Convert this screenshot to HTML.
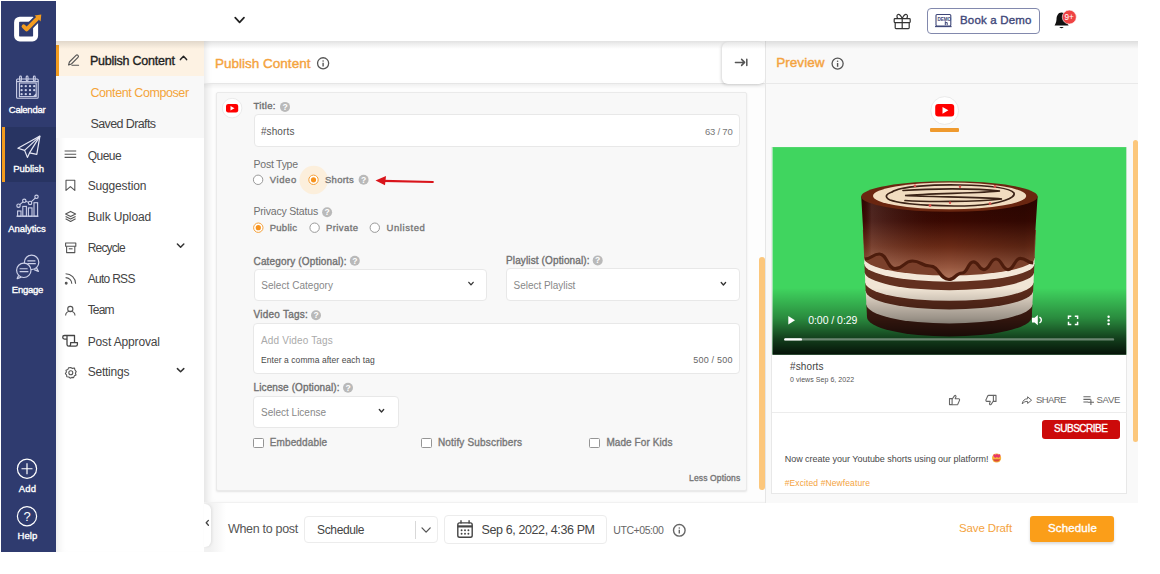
<!DOCTYPE html>
<html><head><meta charset="utf-8"><style>
html,body{margin:0;padding:0;}
body{width:1160px;height:574px;position:relative;overflow:hidden;background:#fff;font-family:"Liberation Sans",sans-serif;}
.a{position:absolute;box-sizing:border-box;}
.t{position:absolute;white-space:nowrap;line-height:1;}
svg{position:absolute;overflow:visible;}

</style></head><body>
<div class="a" style="left:204px;top:41px;width:934px;height:510.6px;background:#f1f1f1;"></div><div class="a" style="left:1px;top:1px;width:55px;height:550.6px;background:#2f3b6f;"></div><div class="a" style="left:1px;top:126.8px;width:55px;height:55.2px;background:#283462;"></div><div class="a" style="left:1.5px;top:126.8px;width:3.0px;height:55.2px;background:#f39c1f;"></div><div class="a" style="left:56px;top:41px;width:148px;height:510.6px;background:#fff;box-shadow:inset 8px 0 8px -6px #e8e8e8;"></div><div class="a" style="left:56px;top:76px;width:148px;height:62.30000000000001px;background:#f8f8f8;"></div><div class="a" style="left:56px;top:41px;width:148px;height:35px;background:#fdf2e3;"></div><div class="a" style="left:56px;top:44.5px;width:3px;height:31.5px;background:#f39c1f;"></div><div class="a" style="left:204px;top:41px;width:561px;height:461px;background:#fdfdfd;box-shadow:inset 7px 0 7px -4px #e2e2e2;"></div><div class="a" style="left:204px;top:41px;width:561px;height:43.2px;background:#fff;border-bottom:1px solid #e6e6e6;box-shadow:inset 6px 0 6px -4px #e8e8e8;"></div><div class="a" style="left:204px;top:84.2px;width:561px;height:4.799999999999997px;background:linear-gradient(rgba(0,0,0,.05),rgba(0,0,0,0));"></div><div class="a" style="left:722px;top:42px;width:42.5px;height:41.5px;background:#fff;border-radius:6px;box-shadow:-1px 1px 3px rgba(0,0,0,.16);"></div><div class="a" style="left:215.8px;top:92.3px;width:531.2px;height:398.5px;background:#f8f8f8;border:1px solid #eaeaea;border-radius:2px;box-shadow:0 1px 2px rgba(0,0,0,.10);"></div><div class="a" style="left:759px;top:257px;width:6px;height:232.5px;background:#fcc77c;border-radius:3px;"></div><div class="a" style="left:765px;top:41px;width:373px;height:461.5px;background:#f9f9f9;border-left:1px solid #e6e6e6;"></div><div class="a" style="left:766px;top:83px;width:372px;height:1px;background:#e9e9e9;"></div><div class="a" style="left:1132.5px;top:140px;width:5.5px;height:301.5px;background:#fcc77c;border-radius:3px;"></div><div class="a" style="left:771px;top:147px;width:355.5999999999999px;height:346.6px;background:#fff;border:1px solid #e8e8e8;"></div><div class="a" style="left:210px;top:503px;width:928px;height:48.60000000000002px;background:#fff;"></div><div class="a" style="left:210px;top:503px;width:16px;height:48.60000000000002px;background:linear-gradient(90deg,#f1f1f1,rgba(255,255,255,0));"></div><div class="a" style="left:204px;top:503.5px;width:6.5px;height:43.5px;background:#fff;border-radius:0 6px 6px 0;box-shadow:1px 0 3px rgba(0,0,0,.08);"></div><div class="a" style="left:56px;top:41px;width:1082px;height:8px;background:linear-gradient(rgba(0,0,0,.11),rgba(0,0,0,0));"></div><div class="a" style="left:254px;top:114.4px;width:486.20000000000005px;height:32.19999999999999px;background:#fff;border:1px solid #e8e8e8;border-radius:4px;"></div><div class="a" style="left:253.5px;top:268.5px;width:233.5px;height:32.5px;background:#fff;border:1px solid #e8e8e8;border-radius:4px;"></div><div class="a" style="left:505.6px;top:268.4px;width:234.60000000000002px;height:32.400000000000034px;background:#fff;border:1px solid #e8e8e8;border-radius:4px;"></div><div class="a" style="left:253.3px;top:322.6px;width:486.90000000000003px;height:51.299999999999955px;background:#fff;border:1px solid #e8e8e8;border-radius:4px;"></div><div class="a" style="left:253.3px;top:395.8px;width:145.3px;height:32.39999999999998px;background:#fff;border:1px solid #e8e8e8;border-radius:4px;"></div><div class="a" style="left:253px;top:438px;width:10.600000000000023px;height:10.199999999999989px;border:1px solid #959595;border-radius:1.5px;background:#fff;"></div><div class="a" style="left:421.2px;top:437.6px;width:10.600000000000023px;height:10.199999999999989px;border:1px solid #959595;border-radius:1.5px;background:#fff;"></div><div class="a" style="left:589.4px;top:437.6px;width:10.600000000000023px;height:10.199999999999989px;border:1px solid #959595;border-radius:1.5px;background:#fff;"></div><svg style="left:0;top:0" width="1" height="1"><circle cx="313.7" cy="180" r="14.3" fill="#fcefdc"/></svg><svg style="left:0;top:0" width="1" height="1"><circle cx="258.1" cy="179.8" r="4.7" fill="#fff" stroke="#9a9a9a" stroke-width="1"/></svg><svg style="left:0;top:0" width="1" height="1"><circle cx="313.5" cy="179.8" r="4.7" fill="#fff" stroke="#f5a13a" stroke-width="1"/><circle cx="313.5" cy="179.8" r="2.6" fill="#f7931e"/></svg><svg style="left:0;top:0" width="1" height="1"><circle cx="258.3" cy="227.7" r="4.7" fill="#fff" stroke="#f5a13a" stroke-width="1"/><circle cx="258.3" cy="227.7" r="2.6" fill="#f7931e"/></svg><svg style="left:0;top:0" width="1" height="1"><circle cx="314.6" cy="227.7" r="4.7" fill="#fff" stroke="#9a9a9a" stroke-width="1"/></svg><svg style="left:0;top:0" width="1" height="1"><circle cx="374.8" cy="227.7" r="4.7" fill="#fff" stroke="#9a9a9a" stroke-width="1"/></svg><svg style="left:0;top:0" width="1" height="1"><circle cx="285" cy="106.9" r="5" fill="#b9b9b9"/><text x="285" y="109.9" font-size="8.6" font-weight="700" fill="#fff" text-anchor="middle" font-family="Liberation Sans">?</text></svg><svg style="left:0;top:0" width="1" height="1"><circle cx="363.6" cy="179.7" r="5" fill="#b9b9b9"/><text x="363.6" y="182.7" font-size="8.6" font-weight="700" fill="#fff" text-anchor="middle" font-family="Liberation Sans">?</text></svg><svg style="left:0;top:0" width="1" height="1"><circle cx="327.1" cy="212.3" r="5" fill="#b9b9b9"/><text x="327.1" y="215.3" font-size="8.6" font-weight="700" fill="#fff" text-anchor="middle" font-family="Liberation Sans">?</text></svg><svg style="left:0;top:0" width="1" height="1"><circle cx="354.8" cy="260.7" r="5" fill="#b9b9b9"/><text x="354.8" y="263.7" font-size="8.6" font-weight="700" fill="#fff" text-anchor="middle" font-family="Liberation Sans">?</text></svg><svg style="left:0;top:0" width="1" height="1"><circle cx="597.7" cy="260.4" r="5" fill="#b9b9b9"/><text x="597.7" y="263.4" font-size="8.6" font-weight="700" fill="#fff" text-anchor="middle" font-family="Liberation Sans">?</text></svg><svg style="left:0;top:0" width="1" height="1"><circle cx="316" cy="315.2" r="5" fill="#b9b9b9"/><text x="316" y="318.2" font-size="8.6" font-weight="700" fill="#fff" text-anchor="middle" font-family="Liberation Sans">?</text></svg><svg style="left:0;top:0" width="1" height="1"><circle cx="348" cy="387.8" r="5" fill="#b9b9b9"/><text x="348" y="390.8" font-size="8.6" font-weight="700" fill="#fff" text-anchor="middle" font-family="Liberation Sans">?</text></svg><svg style="left:0;top:0" width="1" height="1"><path d="M383 180.8 L432.8 182" stroke="#d9141b" stroke-width="2.2" stroke-linecap="round"/><path d="M375.5 180.6 L386 176 L385 185.2 Z" fill="#d9141b"/></svg><svg style="left:0;top:0" width="1" height="1"><path d="M468.8 282.35 L471 284.85 L473.2 282.35" fill="none" stroke="#333" stroke-width="1.3" stroke-linecap="round" stroke-linejoin="round"/></svg><svg style="left:0;top:0" width="1" height="1"><path d="M721.1999999999999 282.55 L723.4 285.05 L725.6 282.55" fill="none" stroke="#333" stroke-width="1.3" stroke-linecap="round" stroke-linejoin="round"/></svg><svg style="left:0;top:0" width="1" height="1"><path d="M379.3 409.55 L381.5 412.05 L383.7 409.55" fill="none" stroke="#333" stroke-width="1.3" stroke-linecap="round" stroke-linejoin="round"/></svg><div class="a" style="left:304.1px;top:516px;width:133.79999999999995px;height:26.799999999999955px;background:#fff;border:1px solid #ececec;border-radius:4px;"></div><div class="a" style="left:415px;top:521px;width:1px;height:17.700000000000045px;background:#d8d8d8;"></div><svg style="left:0;top:0" width="1" height="1"><path d="M422.0 527.9 L426.1 532.1 L430.20000000000005 527.9" fill="none" stroke="#555" stroke-width="1.3" stroke-linecap="round" stroke-linejoin="round"/></svg><div class="a" style="left:444.3px;top:514.7px;width:162.49999999999994px;height:29.5px;background:#fff;border:1px solid #ececec;border-radius:4px;"></div><div class="a" style="left:1030.4px;top:516.2px;width:83.89999999999986px;height:25.399999999999977px;background:#fb9e19;border-radius:3px;box-shadow:0 2px 3px rgba(0,0,0,.15);"></div><div class="a" style="left:772px;top:412px;width:354.5px;height:1px;background:#ececec;"></div><div class="a" style="left:1042.2px;top:420.2px;width:77.79999999999995px;height:18.600000000000023px;background:#cc0a0a;border-radius:3px;"></div><div class="a" style="left:926.5px;top:7.8px;width:113.0px;height:25.8px;border:1.2px solid #8289ad;border-radius:4px;"></div><svg style="left:0;top:0" width="1" height="1"><defs><linearGradient id="choc" x1="0" y1="196" x2="0" y2="280" gradientUnits="userSpaceOnUse"><stop offset="0" stop-color="#2e0600"/><stop offset="0.3" stop-color="#3a0902"/><stop offset="0.6" stop-color="#692a16"/><stop offset="0.85" stop-color="#985840"/><stop offset="1" stop-color="#b47a60"/></linearGradient><linearGradient id="chocH" x1="861" y1="0" x2="1038" y2="0" gradientUnits="userSpaceOnUse"><stop offset="0" stop-color="#000" stop-opacity="0"/><stop offset="0.06" stop-color="#fff" stop-opacity="0.12"/><stop offset="0.5" stop-color="#000" stop-opacity="0"/><stop offset="0.92" stop-color="#000" stop-opacity="0.15"/><stop offset="1" stop-color="#000" stop-opacity="0.05"/></linearGradient><linearGradient id="vgrad" x1="0" y1="288" x2="0" y2="355" gradientUnits="userSpaceOnUse"><stop offset="0" stop-color="#000" stop-opacity="0"/><stop offset="0.45" stop-color="#000" stop-opacity="0.35"/><stop offset="0.75" stop-color="#000" stop-opacity="0.7"/><stop offset="1" stop-color="#000" stop-opacity="0.92"/></linearGradient><clipPath id="vclip"><rect x="772.3" y="147.1" width="354.2" height="207.7"/></clipPath></defs><g clip-path="url(#vclip)"><rect x="772.3" y="147.1" width="354.2" height="207.7" fill="#40d55f"/><path d="M866.4 304.3 L1032.4 304.3 L1031.8 316.9 L867.0 316.9 Z" fill="#4e2216"/><ellipse cx="949.4" cy="316.9" rx="82.4" ry="19.6" fill="#4e2216"/><path d="M865.7 290.8 L1033.1 290.8 L1032.4 304.3 L866.4 304.3 Z" fill="#efe2d2"/><ellipse cx="949.4" cy="304.3" rx="83.0" ry="19.2" fill="#efe2d2"/><path d="M865.3 282.4 L1033.5 282.4 L1033.1 290.8 L865.7 290.8 Z" fill="#5e2c1c"/><ellipse cx="949.4" cy="290.8" rx="83.7" ry="18.7" fill="#5e2c1c"/><path d="M864.8 272.2 L1034.0 272.2 L1033.5 282.4 L865.3 282.4 Z" fill="#f1e5d5"/><ellipse cx="949.4" cy="282.4" rx="84.1" ry="18.4" fill="#f1e5d5"/><path d="M864.4 264.0 L1034.4 264.0 L1034.0 272.2 L864.8 272.2 Z" fill="#63301f"/><ellipse cx="949.4" cy="272.2" rx="84.6" ry="18.0" fill="#63301f"/><path d="M864.2 258.0 L1034.6 258.0 L1034.4 264.0 L864.4 264.0 Z" fill="#f3e7d8"/><ellipse cx="949.4" cy="264.0" rx="85.0" ry="17.7" fill="#f3e7d8"/><path d="M862.8 230.0 L1036.0 230.0 L1034.6 258.0 L864.2 258.0 Z" fill="#7b402b"/><ellipse cx="949.4" cy="258.0" rx="85.2" ry="17.5" fill="#7b402b"/><path d="M861.2 196.5 L1037.6 196.5 L1033.2 263 C1026.8 263 1026.8 258.3 1020.4 258.3 C1014.2 258.3 1014.2 269.6 1008 269.6 C1002.0 269.6 1002.0 259 996 259 C989.95 259 989.95 269.6 983.9 269.6 C978.65 269.6 978.65 261.8 973.4 261.8 C967.7 261.8 967.7 273 962 273 C955.5 273 955.5 279.5 949 279.5 C939.5 279.5 939.5 266 930 266 C921.25 266 921.25 261 912.5 261 C903.75 261 903.75 268.7 895 268.7 C887.2 268.7 887.2 254 879.4 254 C872.0999999999999 254 872.0999999999999 259 864.8 259 Z" fill="url(#choc)"/><path d="M861.2 196.5 L1037.6 196.5 L1033.2 263 C1026.8 263 1026.8 258.3 1020.4 258.3 C1014.2 258.3 1014.2 269.6 1008 269.6 C1002.0 269.6 1002.0 259 996 259 C989.95 259 989.95 269.6 983.9 269.6 C978.65 269.6 978.65 261.8 973.4 261.8 C967.7 261.8 967.7 273 962 273 C955.5 273 955.5 279.5 949 279.5 C939.5 279.5 939.5 266 930 266 C921.25 266 921.25 261 912.5 261 C903.75 261 903.75 268.7 895 268.7 C887.2 268.7 887.2 254 879.4 254 C872.0999999999999 254 872.0999999999999 259 864.8 259 Z" fill="url(#chocH)"/><path d="M864.8 259 C872.0999999999999 259 872.0999999999999 254 879.4 254 C887.2 254 887.2 268.7 895 268.7 C903.75 268.7 903.75 261 912.5 261 C921.25 261 921.25 266 930 266 C939.5 266 939.5 279.5 949 279.5 C955.5 279.5 955.5 273 962 273 C967.7 273 967.7 261.8 973.4 261.8 C978.65 261.8 978.65 269.6 983.9 269.6 C989.95 269.6 989.95 259 996 259 C1002.0 259 1002.0 269.6 1008 269.6 C1014.2 269.6 1014.2 258.3 1020.4 258.3 C1026.8 258.3 1026.8 263 1033.2 263" fill="none" stroke="#4d1c0c" stroke-width="3.2"/><ellipse cx="949.4" cy="196.5" rx="88.2" ry="15.3" fill="#6a2610"/><ellipse cx="949.6" cy="195.9" rx="76.6" ry="13.3" fill="#f1dcc0"/><g fill="none" stroke="#3a2216" stroke-width="1.7" stroke-linecap="round"><path d="M892 192 C900 186 935 184.5 960 185 C990 185.5 1010 188 1014 193 C1016 198 1000 204 975 205.5 C945 207 905 205 890 200 C884 197 886 194 892 192"/><path d="M903 190.5 C930 188.5 975 188 1000 191 C985 193 930 193.5 905 195.5 C930 197 980 197 1002 199 C975 202 925 202 905 200.5"/></g><g fill="#d9534f"><circle cx="915" cy="185.8" r="1.4"/><circle cx="995" cy="186.5" r="1.4"/><circle cx="930" cy="205.5" r="1.4"/><circle cx="990" cy="203.6" r="1.4"/><circle cx="960" cy="186.8" r="1.2"/><circle cx="950" cy="202.8" r="1.2"/></g><rect x="772.3" y="285" width="354.2" height="70" fill="url(#vgrad)"/><path d="M788.3 316 L795 320.2 L788.3 324.5 Z" fill="#fff"/><rect x="784.2" y="338.2" width="330" height="2.4" rx="1.2" fill="#fff" fill-opacity="0.38"/><rect x="784.2" y="338.2" width="17.8" height="2.4" rx="1.2" fill="#fff"/><path d="M1032 317.8 L1034.6 317.8 L1037.8 315 L1037.8 325.2 L1034.6 322.4 L1032 322.4 Z" fill="#fff"/><path d="M1039.5 317.2 C1042 318.8 1042 321.4 1039.5 323" fill="none" stroke="#fff" stroke-width="1.4"/><path d="M1068.5 319 L1068.5 316.3 L1071.3 316.3 M1074.8 316.3 L1077.6 316.3 L1077.6 319 M1077.6 321.8 L1077.6 324.5 L1074.8 324.5 M1071.3 324.5 L1068.5 324.5 L1068.5 321.8" fill="none" stroke="#fff" stroke-width="1.5"/><circle cx="1108.6" cy="316.8" r="1.2" fill="#fff"/><circle cx="1108.6" cy="320.4" r="1.2" fill="#fff"/><circle cx="1108.6" cy="324" r="1.2" fill="#fff"/></g></svg><svg style="left:0;top:0" width="1" height="1"><rect x="16.6" y="19.2" width="19" height="19.7" rx="3.2" fill="none" stroke="#fff" stroke-width="5"/><path d="M23.6 26.4 L26.6 29.4 L37.5 18.4" fill="none" stroke="#2f3b6f" stroke-width="7.5" stroke-linecap="round" stroke-linejoin="round"/><path d="M23.6 26.4 L26.6 29.4 L37 18.8" fill="none" stroke="#f39c1f" stroke-width="4" stroke-linecap="round" stroke-linejoin="round"/><path d="M34.6 15.4 L41.3 14.6 L40.6 21.4 Z" fill="#f39c1f"/></svg><svg style="left:0;top:0" width="1" height="1"><g fill="none" stroke="#ccd0e8" stroke-width="1.1"><rect x="16.6" y="79" width="21.6" height="19.2" rx="1"/><rect x="19.4" y="83" width="16.8" height="13.6"/><path d="M16.6 81.6 H38.2"/><rect x="19.6" y="76" width="1.8" height="5" rx="0.9"/><rect x="26.2" y="76" width="1.8" height="5" rx="0.9"/><rect x="33.4" y="76" width="1.8" height="5" rx="0.9"/></g><g fill="#ccd0e8"><circle cx="21.6" cy="86.2" r="1.15"/><circle cx="25.8" cy="86.2" r="1.15"/><circle cx="30.0" cy="86.2" r="1.15"/><circle cx="34.2" cy="86.2" r="1.15"/><circle cx="21.6" cy="90.2" r="1.15"/><circle cx="25.8" cy="90.2" r="1.15"/><circle cx="30.0" cy="90.2" r="1.15"/><circle cx="34.2" cy="90.2" r="1.15"/><circle cx="21.6" cy="94.2" r="1.15"/><circle cx="25.8" cy="94.2" r="1.15"/><circle cx="30.0" cy="94.2" r="1.15"/></g><path d="M32.8 96.6 L36.2 93.2 L36.2 96.6 Z" fill="#ccd0e8"/></svg><svg style="left:0;top:0" width="1" height="1"><g fill="none" stroke="#e6e8f4" stroke-width="1.2" stroke-linejoin="round"><path d="M39.9 136.1 L17.9 148.3 L24.6 150.4 L27.4 157.4 L29.5 152.9 L36.8 154.4 Z"/><path d="M39.9 136.1 L24.6 150.4"/><path d="M39.9 136.1 L29.5 152.9"/></g></svg><svg style="left:0;top:0" width="1" height="1"><g fill="none" stroke="#ccd0e8" stroke-width="1.1"><path d="M16.4 216.2 H38.4"/><rect x="17.6" y="211" width="3.4" height="5.2"/><rect x="22.8" y="206.4" width="3.6" height="9.8"/><rect x="28.4" y="207.9" width="3.6" height="8.3"/><rect x="34" y="202.7" width="3.6" height="13.5"/><path d="M18.5 205.7 L24.3 200.8 L30.1 202.9 L36.5 196.8"/></g><g fill="#2f3b6f" stroke="#ccd0e8" stroke-width="1.1"><circle cx="18.5" cy="205.7" r="1.7"/><circle cx="24.3" cy="200.8" r="1.7"/><circle cx="30.1" cy="202.9" r="1.7"/><circle cx="36.5" cy="196.8" r="1.7"/></g></svg><svg style="left:0;top:0" width="1" height="1"><g fill="#2f3b6f" stroke="#ccd0e8" stroke-width="1.2" stroke-linejoin="round"><path d="M36.4 267.6 L38.4 271.4 L34.2 269.6"/><circle cx="31.6" cy="262.3" r="7.2"/><path d="M27.4 260.9 H35.4 M27.4 263.6 H35.8" stroke-width="1.1"/><path d="M18.6 275.4 L17.2 278.6 L21.2 277.2"/><circle cx="23.8" cy="270.3" r="7.2"/><path d="M19.6 268.8 H27.6 M19.6 271.6 H28.4" stroke-width="1.1"/></g></svg><svg style="left:0;top:0" width="1" height="1"><g fill="none" stroke="#fff" stroke-width="1.2"><circle cx="27" cy="468.75" r="9.6"/><path d="M27 463.2 V474.3 M21.5 468.75 H32.5"/><circle cx="27" cy="516.25" r="9.6"/></g><text x="27" y="521" font-size="13" fill="#fff" text-anchor="middle" font-family="Liberation Sans">?</text></svg><svg style="left:0;top:0" width="1" height="1"><g fill="none" stroke="#555" stroke-width="1.1" stroke-linecap="round" stroke-linejoin="round"><path d="M68.6 65 L69.4 62 L76 55.4 A1.4 1.4 0 0 1 78 57.4 L71.4 64 Z"/><path d="M72 65.2 H78.6"/></g><path d="M180.4 59.6 L183.5 56.3 L186.6 59.6" fill="none" stroke="#222" stroke-width="1.5" stroke-linecap="round" stroke-linejoin="round"/></svg><svg style="left:0;top:0" width="1" height="1"><g fill="none" stroke="#555" stroke-width="1.1" stroke-linejoin="round"><path d="M64.6 151 H76.2 M64.6 154.2 H76.2 M64.6 157.4 H76.2"/><path d="M66 180.2 H74.8 V190.4 L70.4 186.6 L66 190.4 Z"/><path d="M70.6 211.4 L75.6 214 L70.6 216.6 L65.6 214 Z"/><path d="M65.6 216.4 L70.6 219 L75.6 216.4"/><path d="M65.6 218.8 L70.6 221.4 L75.6 218.8"/><rect x="65.6" y="243" width="10.2" height="3.2"/><path d="M66.6 246.2 V252.6 H74.8 V246.2"/><path d="M68.8 248.8 H72.6"/><path d="M65.6 273.8 A10 10 0 0 1 75.6 283.8"/><path d="M65.6 277.6 A6.2 6.2 0 0 1 71.8 283.8"/><circle cx="66.2" cy="283.2" r="0.9" fill="#555"/><circle cx="70.3" cy="309" r="2.6"/><path d="M65.6 315.6 A4.7 4.4 0 0 1 75 315.6"/><path d="M64.5 335.5 H74.5 V342.6 M64.5 335.5 A1.8 1.8 0 0 0 64.5 339.1 H67 M67 335.5 V344.4 A1.8 1.8 0 0 0 68.8 346.2 H75.6 A1.8 1.8 0 0 0 77.4 344.4 V342.6 H70.6 V344.4 A1.8 1.8 0 0 1 68.8 346.2" stroke-width="1.3" stroke="#444"/><circle cx="70.8" cy="372.8" r="2"/><path d="M70.8 367.6 L72.4 368.4 L74.4 368 L75 370 L76.2 371.6 L75.4 373.2 L76 375 L74.4 375.8 L73.6 377.6 L71.8 377.4 L70.2 378.2 L68.8 377 L66.8 376.8 L66.6 375 L65.4 373.6 L66.4 372 L66 370.2 L67.8 369.6 L68.6 367.8 Z"/></g></svg><svg style="left:0;top:0" width="1" height="1"><path d="M177.4 244.0 L180.6 247.2 L183.79999999999998 244.0" fill="none" stroke="#333" stroke-width="1.5" stroke-linecap="round" stroke-linejoin="round"/></svg><svg style="left:0;top:0" width="1" height="1"><path d="M177.4 368.59999999999997 L180.6 371.8 L183.79999999999998 368.59999999999997" fill="none" stroke="#333" stroke-width="1.5" stroke-linecap="round" stroke-linejoin="round"/></svg><svg style="left:0;top:0" width="1" height="1"><path d="M235.2 17.6 L239.6 22.4 L244 17.6" fill="none" stroke="#222" stroke-width="1.7" stroke-linecap="round" stroke-linejoin="round"/></svg><svg style="left:0;top:0" width="1" height="1"><g fill="none" stroke="#333" stroke-width="1.2" stroke-linejoin="round"><rect x="894.2" y="18.6" width="16" height="4" rx="0.8"/><path d="M895.2 22.6 V27.8 A0.8 0.8 0 0 0 896 28.6 H908.4 A0.8 0.8 0 0 0 909.2 27.8 V22.6"/><path d="M902.2 18.6 V28.6"/><path d="M902.2 18.4 C899 12 895.5 14.5 897.6 18.4 M902.2 18.4 C905.4 12 908.9 14.5 906.8 18.4"/></g></svg><svg style="left:0;top:0" width="1" height="1"><g fill="none" stroke="#3e4678" stroke-width="1.1"><rect x="936" y="14.5" width="14.8" height="11.6" rx="1"/><path d="M935 26.6 H951.6"/></g><text x="937.4" y="20.6" font-size="4.6" font-weight="700" fill="#3e4678" font-family="Liberation Sans">DEMO</text><path d="M945.3 21.3 V25.2 M945.3 22.6 H947.2 V25.2" fill="none" stroke="#3e4678" stroke-width="1"/></svg><svg style="left:0;top:0" width="1" height="1"><path d="M1061.5 12.6 C1058 12.6 1056.6 16 1056.5 19.5 C1056.3 22.6 1055.4 24 1054.6 25.4 H1068.6 C1067.8 24 1066.8 22.6 1066.6 19.5 C1066.4 16 1065 12.6 1061.5 12.6 Z" fill="#111"/><path d="M1059.3 27 A2.3 1.6 0 0 0 1063.7 27 Z" fill="#111"/><circle cx="1069.3" cy="17.1" r="7" fill="#ef4343" stroke="#fff" stroke-width="0.6"/><text x="1069.2" y="20.2" font-size="8.2" fill="#fff" text-anchor="middle" font-family="Liberation Sans">9+</text></svg><svg style="left:0;top:0" width="1" height="1"><circle cx="323.1" cy="63.3" r="5.55" fill="none" stroke="#555" stroke-width="1.3"/><circle cx="323.1" cy="61.0" r="0.8" fill="#555"/><path d="M323.1 62.699999999999996 V66.5" stroke="#555" stroke-width="1.4"/></svg><svg style="left:0;top:0" width="1" height="1"><circle cx="837.6" cy="63.6" r="5.55" fill="none" stroke="#555" stroke-width="1.3"/><circle cx="837.6" cy="61.300000000000004" r="0.8" fill="#555"/><path d="M837.6 63.0 V66.8" stroke="#555" stroke-width="1.4"/></svg><svg style="left:0;top:0" width="1" height="1"><circle cx="679.3" cy="530.3" r="5.8" fill="none" stroke="#666" stroke-width="1.4"/><circle cx="679.3" cy="528.0" r="0.8" fill="#666"/><path d="M679.3 529.6999999999999 V533.5" stroke="#666" stroke-width="1.4"/></svg><svg style="left:0;top:0" width="1" height="1"><g fill="none" stroke="#555" stroke-width="1.5" stroke-linecap="round" stroke-linejoin="round"><path d="M735.4 62.4 H744.4 M741.6 59.4 L744.6 62.4 L741.6 65.4 M746.8 59.3 V65.6"/></g></svg><svg style="left:0;top:0" width="1" height="1"><circle cx="232.1" cy="108.1" r="9.8" fill="#fff" stroke="#e6e6e6" stroke-width="0.8"/><rect x="226.0" y="103.89999999999999" width="12.2" height="8.6" rx="2.2" fill="#ff0000"/><path d="M230.5 106.0 L234.5 108.19999999999999 L230.5 110.39999999999999 Z" fill="#fff"/></svg><svg style="left:0;top:0" width="1" height="1"><circle cx="944.7" cy="110.5" r="13.9" fill="#fff" stroke="#e4e4e4" stroke-width="0.8"/><rect x="935.2" y="104" width="19" height="12.6" rx="3" fill="#ff0000"/><path d="M942.5 106.9 L948.4 110.3 L942.5 113.7 Z" fill="#fff"/></svg><div class="a" style="left:930px;top:128.2px;width:29px;height:3.4000000000000057px;background:#ef9a2e;border-radius:1px;"></div><svg style="left:0;top:0" width="1" height="1"><g fill="none" stroke="#444" stroke-width="1.4"><rect x="457.8" y="522.9" width="14.4" height="14.4" rx="1.8"/><path d="M457.8 526.4 H472.2" stroke-width="2.2"/><path d="M461 520.2 V523.4 M469.1 520.2 V523.4"/></g><g fill="#444"><circle cx="461.6" cy="530.2" r="0.95"/><circle cx="461.6" cy="533.7" r="0.95"/><circle cx="465.0" cy="530.2" r="0.95"/><circle cx="465.0" cy="533.7" r="0.95"/><circle cx="468.40000000000003" cy="530.2" r="0.95"/><circle cx="468.40000000000003" cy="533.7" r="0.95"/></g></svg><svg style="left:0;top:0" width="1" height="1"><path d="M208.4 520.4 L206.2 522.8 L208.4 525.2" fill="none" stroke="#444" stroke-width="1.3" stroke-linecap="round" stroke-linejoin="round"/></svg><svg style="left:0;top:0" width="1" height="1"><g fill="none" stroke="#666" stroke-width="1.1" stroke-linejoin="round"><rect x="949.5" y="398.6" width="2.6" height="6"/><path d="M952.1 399.2 L954.6 395.6 C955.6 395 956.4 396 955.8 397.2 L955.2 398.8 H958.6 C959.6 398.8 959.8 399.8 959.4 400.6 L957.8 404.2 C957.6 404.6 957.3 404.8 956.8 404.8 H952.1"/><rect x="993.4" y="395.4" width="2.6" height="6"/><path d="M993.4 401 L990.9 404.6 C989.9 405.2 989.1 404.2 989.7 403 L990.3 401.4 H986.9 C985.9 401.4 985.7 400.4 986.1 399.6 L987.7 396 C987.9 395.6 988.2 395.4 988.7 395.4 H993.4"/></g><path d="M1022.2 404 C1022.6 400.4 1025 398.6 1027.6 398.8 V396.8 L1031.6 400.2 L1027.6 403.4 V401.4 C1025.4 401.2 1023.6 402.2 1022.2 404 Z" fill="none" stroke="#666" stroke-width="1" stroke-linejoin="round"/><path d="M1083.4 396.8 H1090.6 M1083.4 399.4 H1090.6 M1083.4 402 H1088 M1087.8 402.2 H1094 M1090.9 399.4 V405" fill="none" stroke="#666" stroke-width="1.1"/></svg><svg style="left:0;top:0" width="1" height="1"><circle cx="996.6" cy="458" r="4.6" fill="#f7b03c"/><path d="M993 459.2 C994 462.4 999.2 462.4 1000.2 459.2 Z" fill="#d84a3a"/><path d="M993.4 455.4 C993.4 454 995.2 454 995.4 455.2 C995.6 454 997.4 454 997.4 455.4 C997.4 456.6 995.4 457.8 995.4 457.8 C995.4 457.8 993.4 456.6 993.4 455.4 Z" fill="#e8336e"/><path d="M995.8 455.4 C995.8 454 997.6 454 997.8 455.2 C998 454 999.8 454 999.8 455.4 C999.8 456.6 997.8 457.8 997.8 457.8 C997.8 457.8 995.8 456.6 995.8 455.4 Z" fill="#e8336e" transform="translate(0.6 0)"/></svg>
<div class="t" style="left:8.80px;top:105.11px;font-size:9.5px;color:#ffffff;font-weight:400;letter-spacing:-0.241px;font-family:'Liberation Sans';-webkit-text-stroke:0.35px #ffffff;">Calendar</div>
<div class="t" style="left:13.30px;top:164.11px;font-size:9.5px;color:#ffffff;font-weight:400;letter-spacing:-0.062px;font-family:'Liberation Sans';-webkit-text-stroke:0.35px #ffffff;">Publish</div>
<div class="t" style="left:8.30px;top:224.11px;font-size:9.5px;color:#ffffff;font-weight:400;letter-spacing:-0.083px;font-family:'Liberation Sans';-webkit-text-stroke:0.35px #ffffff;">Analytics</div>
<div class="t" style="left:11.80px;top:285.11px;font-size:9.5px;color:#ffffff;font-weight:400;letter-spacing:-0.254px;font-family:'Liberation Sans';-webkit-text-stroke:0.35px #ffffff;">Engage</div>
<div class="t" style="left:18.75px;top:484.11px;font-size:9.5px;color:#ffffff;font-weight:400;letter-spacing:0.190px;font-family:'Liberation Sans';-webkit-text-stroke:0.35px #ffffff;">Add</div>
<div class="t" style="left:17.50px;top:531.11px;font-size:9.5px;color:#ffffff;font-weight:400;letter-spacing:0.082px;font-family:'Liberation Sans';-webkit-text-stroke:0.35px #ffffff;">Help</div>
<div class="t" style="left:89.90px;top:54.57px;font-size:12.5px;color:#222;font-weight:400;letter-spacing:-0.227px;font-family:'Liberation Sans';-webkit-text-stroke:0.35px #222;">Publish Content</div>
<div class="t" style="left:90.40px;top:86.57px;font-size:12.5px;color:#f4a43a;font-weight:400;letter-spacing:-0.417px;font-family:'Liberation Sans';">Content Composer</div>
<div class="t" style="left:90.40px;top:117.57px;font-size:12.5px;color:#444;font-weight:400;letter-spacing:-0.600px;font-family:'Liberation Sans';">Saved Drafts</div>
<div class="t" style="left:87.70px;top:149.99px;font-size:12px;color:#444;font-weight:400;letter-spacing:-0.514px;font-family:'Liberation Sans';">Queue</div>
<div class="t" style="left:87.70px;top:179.99px;font-size:12px;color:#444;font-weight:400;letter-spacing:-0.153px;font-family:'Liberation Sans';">Suggestion</div>
<div class="t" style="left:87.70px;top:210.99px;font-size:12px;color:#444;font-weight:400;letter-spacing:-0.123px;font-family:'Liberation Sans';">Bulk Upload</div>
<div class="t" style="left:87.70px;top:241.99px;font-size:12px;color:#444;font-weight:400;letter-spacing:-0.801px;font-family:'Liberation Sans';">Recycle</div>
<div class="t" style="left:87.70px;top:272.99px;font-size:12px;color:#444;font-weight:400;letter-spacing:-0.713px;font-family:'Liberation Sans';">Auto RSS</div>
<div class="t" style="left:87.70px;top:303.99px;font-size:12px;color:#444;font-weight:400;letter-spacing:-0.816px;font-family:'Liberation Sans';">Team</div>
<div class="t" style="left:87.70px;top:335.99px;font-size:12px;color:#444;font-weight:400;letter-spacing:-0.145px;font-family:'Liberation Sans';">Post Approval</div>
<div class="t" style="left:87.70px;top:365.99px;font-size:12px;color:#444;font-weight:400;letter-spacing:-0.237px;font-family:'Liberation Sans';">Settings</div>
<div class="t" style="left:214.90px;top:56.72px;font-size:13.5px;color:#f4a340;font-weight:400;letter-spacing:0.017px;font-family:'Liberation Sans';-webkit-text-stroke:0.4px #f4a340;">Publish Content</div>
<div class="t" style="left:776.20px;top:55.72px;font-size:13.5px;color:#f4a340;font-weight:400;letter-spacing:0.056px;font-family:'Liberation Sans';-webkit-text-stroke:0.4px #f4a340;">Preview</div>
<div class="t" style="left:960.00px;top:15.42px;font-size:11.5px;color:#3e4678;font-weight:400;letter-spacing:0.172px;font-family:'Liberation Sans';-webkit-text-stroke:0.35px #3e4678;">Book a Demo</div>
<div class="t" style="left:253.60px;top:101.11px;font-size:9.5px;color:#707070;font-weight:400;letter-spacing:0.321px;font-family:'Liberation Sans';-webkit-text-stroke:0.35px #707070;">Title:</div>
<div class="t" style="left:260.90px;top:126.69px;font-size:10px;color:#555;font-weight:400;letter-spacing:0.118px;font-family:'Liberation Sans';">#shorts</div>
<div class="t" style="left:705.00px;top:127.11px;font-size:9.5px;color:#777;font-weight:400;letter-spacing:-0.228px;font-family:'Liberation Sans';">63 / 70</div>
<div class="t" style="left:253.60px;top:159.26px;font-size:10.5px;color:#707070;font-weight:400;letter-spacing:-0.256px;font-family:'Liberation Sans';">Post Type</div>
<div class="t" style="left:269.70px;top:175.11px;font-size:9.5px;color:#777;font-weight:400;letter-spacing:0.614px;font-family:'Liberation Sans';-webkit-text-stroke:0.35px #777;">Video</div>
<div class="t" style="left:325.00px;top:175.11px;font-size:9.5px;color:#777;font-weight:400;letter-spacing:0.259px;font-family:'Liberation Sans';-webkit-text-stroke:0.35px #777;">Shorts</div>
<div class="t" style="left:253.40px;top:206.26px;font-size:10.5px;color:#707070;font-weight:400;letter-spacing:-0.181px;font-family:'Liberation Sans';">Privacy Status</div>
<div class="t" style="left:269.70px;top:223.11px;font-size:9.5px;color:#777;font-weight:400;letter-spacing:0.275px;font-family:'Liberation Sans';-webkit-text-stroke:0.35px #777;">Public</div>
<div class="t" style="left:326.00px;top:223.11px;font-size:9.5px;color:#777;font-weight:400;letter-spacing:0.419px;font-family:'Liberation Sans';-webkit-text-stroke:0.35px #777;">Private</div>
<div class="t" style="left:386.60px;top:223.11px;font-size:9.5px;color:#777;font-weight:400;letter-spacing:0.552px;font-family:'Liberation Sans';-webkit-text-stroke:0.35px #777;">Unlisted</div>
<div class="t" style="left:253.50px;top:256.69px;font-size:10px;color:#707070;font-weight:400;letter-spacing:0.160px;font-family:'Liberation Sans';-webkit-text-stroke:0.35px #707070;">Category (Optional):</div>
<div class="t" style="left:506.00px;top:255.69px;font-size:10px;color:#707070;font-weight:400;letter-spacing:0.128px;font-family:'Liberation Sans';-webkit-text-stroke:0.35px #707070;">Playlist (Optional):</div>
<div class="t" style="left:261.30px;top:280.69px;font-size:10px;color:#888;font-weight:400;letter-spacing:0.039px;font-family:'Liberation Sans';">Select Category</div>
<div class="t" style="left:513.50px;top:280.69px;font-size:10px;color:#888;font-weight:400;letter-spacing:-0.026px;font-family:'Liberation Sans';">Select Playlist</div>
<div class="t" style="left:253.50px;top:309.69px;font-size:10px;color:#707070;font-weight:400;letter-spacing:0.250px;font-family:'Liberation Sans';-webkit-text-stroke:0.35px #707070;">Video Tags:</div>
<div class="t" style="left:261.00px;top:335.69px;font-size:10px;color:#aaa;font-weight:400;letter-spacing:0.164px;font-family:'Liberation Sans';">Add Video Tags</div>
<div class="t" style="left:261.00px;top:355.95px;font-size:8.5px;color:#4a4a4a;font-weight:400;letter-spacing:0.065px;font-family:'Liberation Sans';">Enter a comma after each tag</div>
<div class="t" style="left:693.30px;top:355.53px;font-size:9px;color:#666;font-weight:400;letter-spacing:0.196px;font-family:'Liberation Sans';">500 / 500</div>
<div class="t" style="left:253.50px;top:382.69px;font-size:10px;color:#707070;font-weight:400;letter-spacing:0.114px;font-family:'Liberation Sans';-webkit-text-stroke:0.35px #707070;">License (Optional):</div>
<div class="t" style="left:261.00px;top:407.69px;font-size:10px;color:#888;font-weight:400;letter-spacing:0.002px;font-family:'Liberation Sans';">Select License</div>
<div class="t" style="left:269.70px;top:437.69px;font-size:10px;color:#777;font-weight:400;letter-spacing:0.134px;font-family:'Liberation Sans';-webkit-text-stroke:0.35px #777;">Embeddable</div>
<div class="t" style="left:437.90px;top:437.69px;font-size:10px;color:#777;font-weight:400;letter-spacing:0.180px;font-family:'Liberation Sans';-webkit-text-stroke:0.35px #777;">Notify Subscribers</div>
<div class="t" style="left:606.40px;top:437.69px;font-size:10px;color:#777;font-weight:400;letter-spacing:0.081px;font-family:'Liberation Sans';-webkit-text-stroke:0.35px #777;">Made For Kids</div>
<div class="t" style="left:689.00px;top:473.95px;font-size:8.5px;color:#777;font-weight:400;letter-spacing:0.149px;font-family:'Liberation Sans';-webkit-text-stroke:0.35px #777;">Less Options</div>
<div class="t" style="left:228.00px;top:522.57px;font-size:12.5px;color:#555;font-weight:400;letter-spacing:-0.316px;font-family:'Liberation Sans';">When to post</div>
<div class="t" style="left:317.10px;top:523.99px;font-size:12px;color:#444;font-weight:400;letter-spacing:-0.381px;font-family:'Liberation Sans';">Schedule</div>
<div class="t" style="left:481.50px;top:523.57px;font-size:12.5px;color:#444;font-weight:400;letter-spacing:-0.390px;font-family:'Liberation Sans';">Sep 6, 2022, 4:36 PM</div>
<div class="t" style="left:613.30px;top:525.26px;font-size:10.5px;color:#666;font-weight:400;letter-spacing:-0.431px;font-family:'Liberation Sans';">UTC+05:00</div>
<div class="t" style="left:959.00px;top:523.42px;font-size:11.5px;color:#f4a340;font-weight:400;letter-spacing:-0.137px;font-family:'Liberation Sans';">Save Draft</div>
<div class="t" style="left:1048.00px;top:523.42px;font-size:11.5px;color:#fff;font-weight:400;letter-spacing:0.135px;font-family:'Liberation Sans';-webkit-text-stroke:0.35px #fff;">Schedule</div>
<div class="t" style="left:808.20px;top:315.26px;font-size:10.5px;color:#fff;font-weight:400;letter-spacing:-0.038px;font-family:'Liberation Sans';">0:00 / 0:29</div>
<div class="t" style="left:790.00px;top:361.69px;font-size:10px;color:#444;font-weight:400;letter-spacing:0.118px;font-family:'Liberation Sans';">#shorts</div>
<div class="t" style="left:790.00px;top:376.22px;font-size:7px;color:#555;font-weight:400;letter-spacing:0.058px;font-family:'Liberation Sans';">0 views Sep 6, 2022</div>
<div class="t" style="left:1035.90px;top:395.11px;font-size:9.5px;color:#6a6a6a;font-weight:400;letter-spacing:-0.549px;font-family:'Liberation Sans';">SHARE</div>
<div class="t" style="left:1096.50px;top:395.11px;font-size:9.5px;color:#6a6a6a;font-weight:400;letter-spacing:-0.268px;font-family:'Liberation Sans';">SAVE</div>
<div class="t" style="left:1054.00px;top:423.69px;font-size:10px;color:#fff;font-weight:400;letter-spacing:-0.478px;font-family:'Liberation Sans';-webkit-text-stroke:0.35px #fff;">SUBSCRIBE</div>
<div class="t" style="left:784.70px;top:454.53px;font-size:9px;color:#484848;font-weight:400;letter-spacing:-0.018px;font-family:'Liberation Sans';">Now create your Youtube shorts using our platform!</div>
<div class="t" style="left:784.70px;top:478.95px;font-size:8.5px;color:#f4a340;font-weight:400;letter-spacing:0.109px;font-family:'Liberation Sans';">#Excited #Newfeature</div>
</body></html>
